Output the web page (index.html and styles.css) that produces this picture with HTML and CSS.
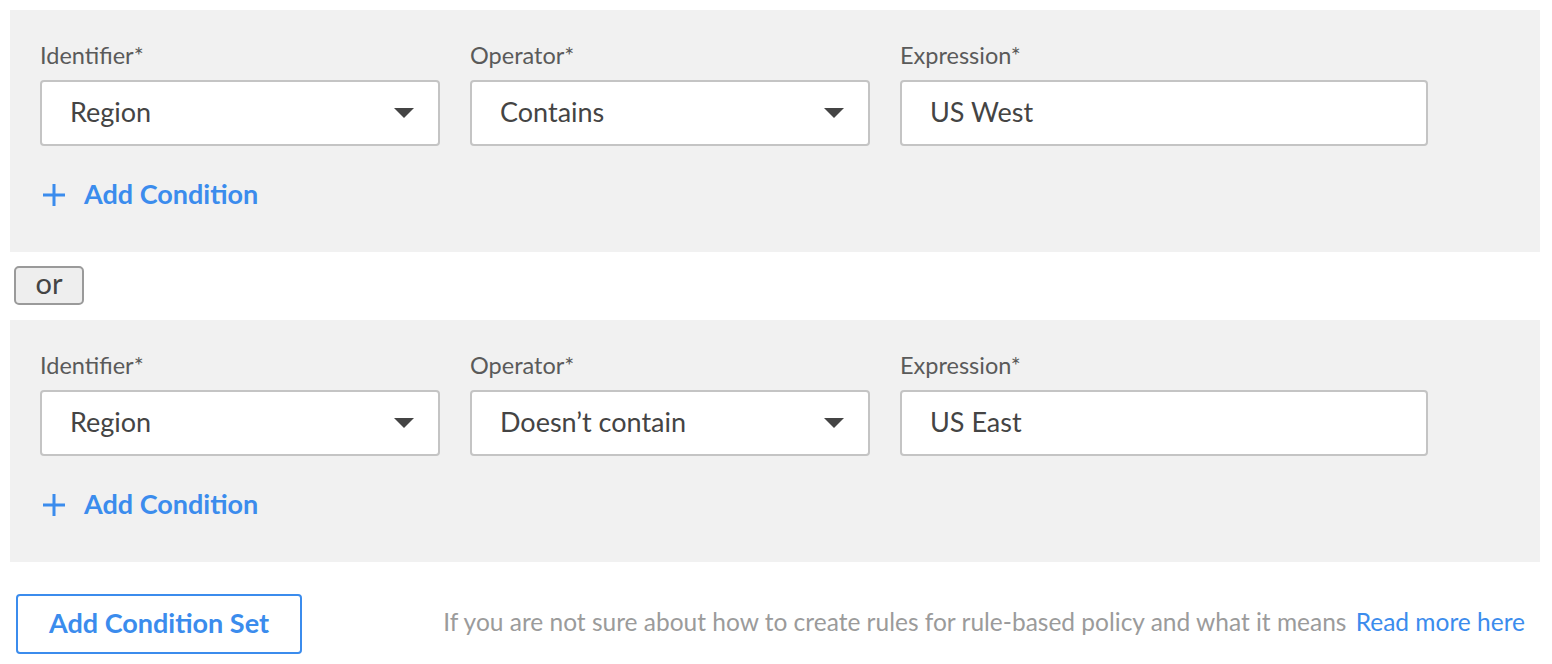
FILE: index.html
```html
<!DOCTYPE html>
<html>
<head>
<meta charset="utf-8">
<link rel="stylesheet" href="styles.css">
</head>
<body>
<div class="page">
  <div class="set">
    <div class="fields">
      <div class="field f-sel">
        <div class="label">Identifier*</div>
        <div class="box select"><span>Region</span><svg class="caret" width="20" height="10" viewBox="0 0 20 10"><path d="M0 0H20L10 10Z" fill="#444"/></svg></div>
      </div>
      <div class="field f-sel">
        <div class="label">Operator*</div>
        <div class="box select"><span>Contains</span><svg class="caret" width="20" height="10" viewBox="0 0 20 10"><path d="M0 0H20L10 10Z" fill="#444"/></svg></div>
      </div>
      <div class="field f-exp">
        <div class="label">Expression*</div>
        <div class="box"><span>US West</span></div>
      </div>
    </div>
    <div class="add"><svg class="plus" width="24" height="24" viewBox="0 0 24 24"><path d="M12 1V23M1 12H23" stroke="#3b8ced" stroke-width="3"/></svg><span>Add Condition</span></div>
  </div>
  <div class="or-row"><span class="or">or</span></div>
  <div class="set">
    <div class="fields">
      <div class="field f-sel">
        <div class="label">Identifier*</div>
        <div class="box select"><span>Region</span><svg class="caret" width="20" height="10" viewBox="0 0 20 10"><path d="M0 0H20L10 10Z" fill="#444"/></svg></div>
      </div>
      <div class="field f-sel">
        <div class="label">Operator*</div>
        <div class="box select"><span>Doesn’t contain</span><svg class="caret" width="20" height="10" viewBox="0 0 20 10"><path d="M0 0H20L10 10Z" fill="#444"/></svg></div>
      </div>
      <div class="field f-exp">
        <div class="label">Expression*</div>
        <div class="box"><span>US East</span></div>
      </div>
    </div>
    <div class="add"><svg class="plus" width="24" height="24" viewBox="0 0 24 24"><path d="M12 1V23M1 12H23" stroke="#3b8ced" stroke-width="3"/></svg><span>Add Condition</span></div>
  </div>
  <div class="footer">
    <button class="set-btn">Add Condition Set</button>
    <div class="help">If you are not sure about how to create rules for rule-based policy and what it means <a class="link">Read more here</a></div>
  </div>
</div>
</body>
</html>
```
FILE: styles.css
```css
html, body {
  margin: 0;
  padding: 0;
  background: #fff;
}
body {
  font-family: "Source Sans Pro", Lato, "Noto Sans", sans-serif;
  color: #444;
}
.page {
  padding: 10px 12px 0 10px;
}
.set {
  background: #f1f1f1;
  padding: 30px 30px 38px 30px;
}
.fields {
  display: flex;
  gap: 30px;
}
.field {
  display: flex;
  flex-direction: column;
}
.f-sel { width: 400px; }
.f-exp { width: 528px; }
.label {
  height: 30px;
  line-height: 30px;
  font-size: 23.5px;
  color: #5a5a5a;
  font-weight: 400;
  margin-bottom: 10px;
}
.box {
  box-sizing: border-box;
  height: 66px;
  background: #fff;
  border: 2px solid #c4c4c4;
  border-radius: 4px;
  display: flex;
  align-items: center;
  justify-content: space-between;
  padding: 0 24px 0 28px;
  font-size: 27px;
  color: #444;
}
.box span { margin-top: -3px; }
.caret { display: block; margin-top: 0; }
.add {
  margin-top: 30px;
  height: 38px;
  display: flex;
  align-items: center;
  gap: 18px;
  padding-left: 2px;
  color: #3b8ced;
  font-size: 27px;
  font-weight: 700;
}
.add span { margin-top: -3px; }
.plus { display: block; }
.or-row {
  height: 68px;
  display: flex;
  align-items: center;
  padding-left: 4px;
}
.or {
  box-sizing: border-box;
  width: 70px;
  height: 39px;
  margin-top: -2px;
  border: 2px solid #9a9a9a;
  border-radius: 5px;
  background: #eee;
  display: flex;
  align-items: center;
  justify-content: center;
  font-size: 29px;
  color: #444;
  padding-bottom: 5px;
}
.footer {
  margin-top: 32px;
  display: flex;
  align-items: center;
  justify-content: space-between;
  padding-left: 6px;
  padding-right: 15px;
}
.set-btn {
  box-sizing: border-box;
  width: 286px;
  height: 60px;
  border: 2px solid #3b8ced;
  border-radius: 4px;
  background: #fff;
  color: #3b8ced;
  font-family: inherit;
  font-size: 27px;
  font-weight: 700;
  padding: 0 0 4px 0;
}
.help {
  font-size: 24.5px;
  color: #9b9b9b;
  font-weight: 400;
  margin-top: -6px;
}
.link {
  color: #3b8ced;
  margin-left: 3px;
}
```
